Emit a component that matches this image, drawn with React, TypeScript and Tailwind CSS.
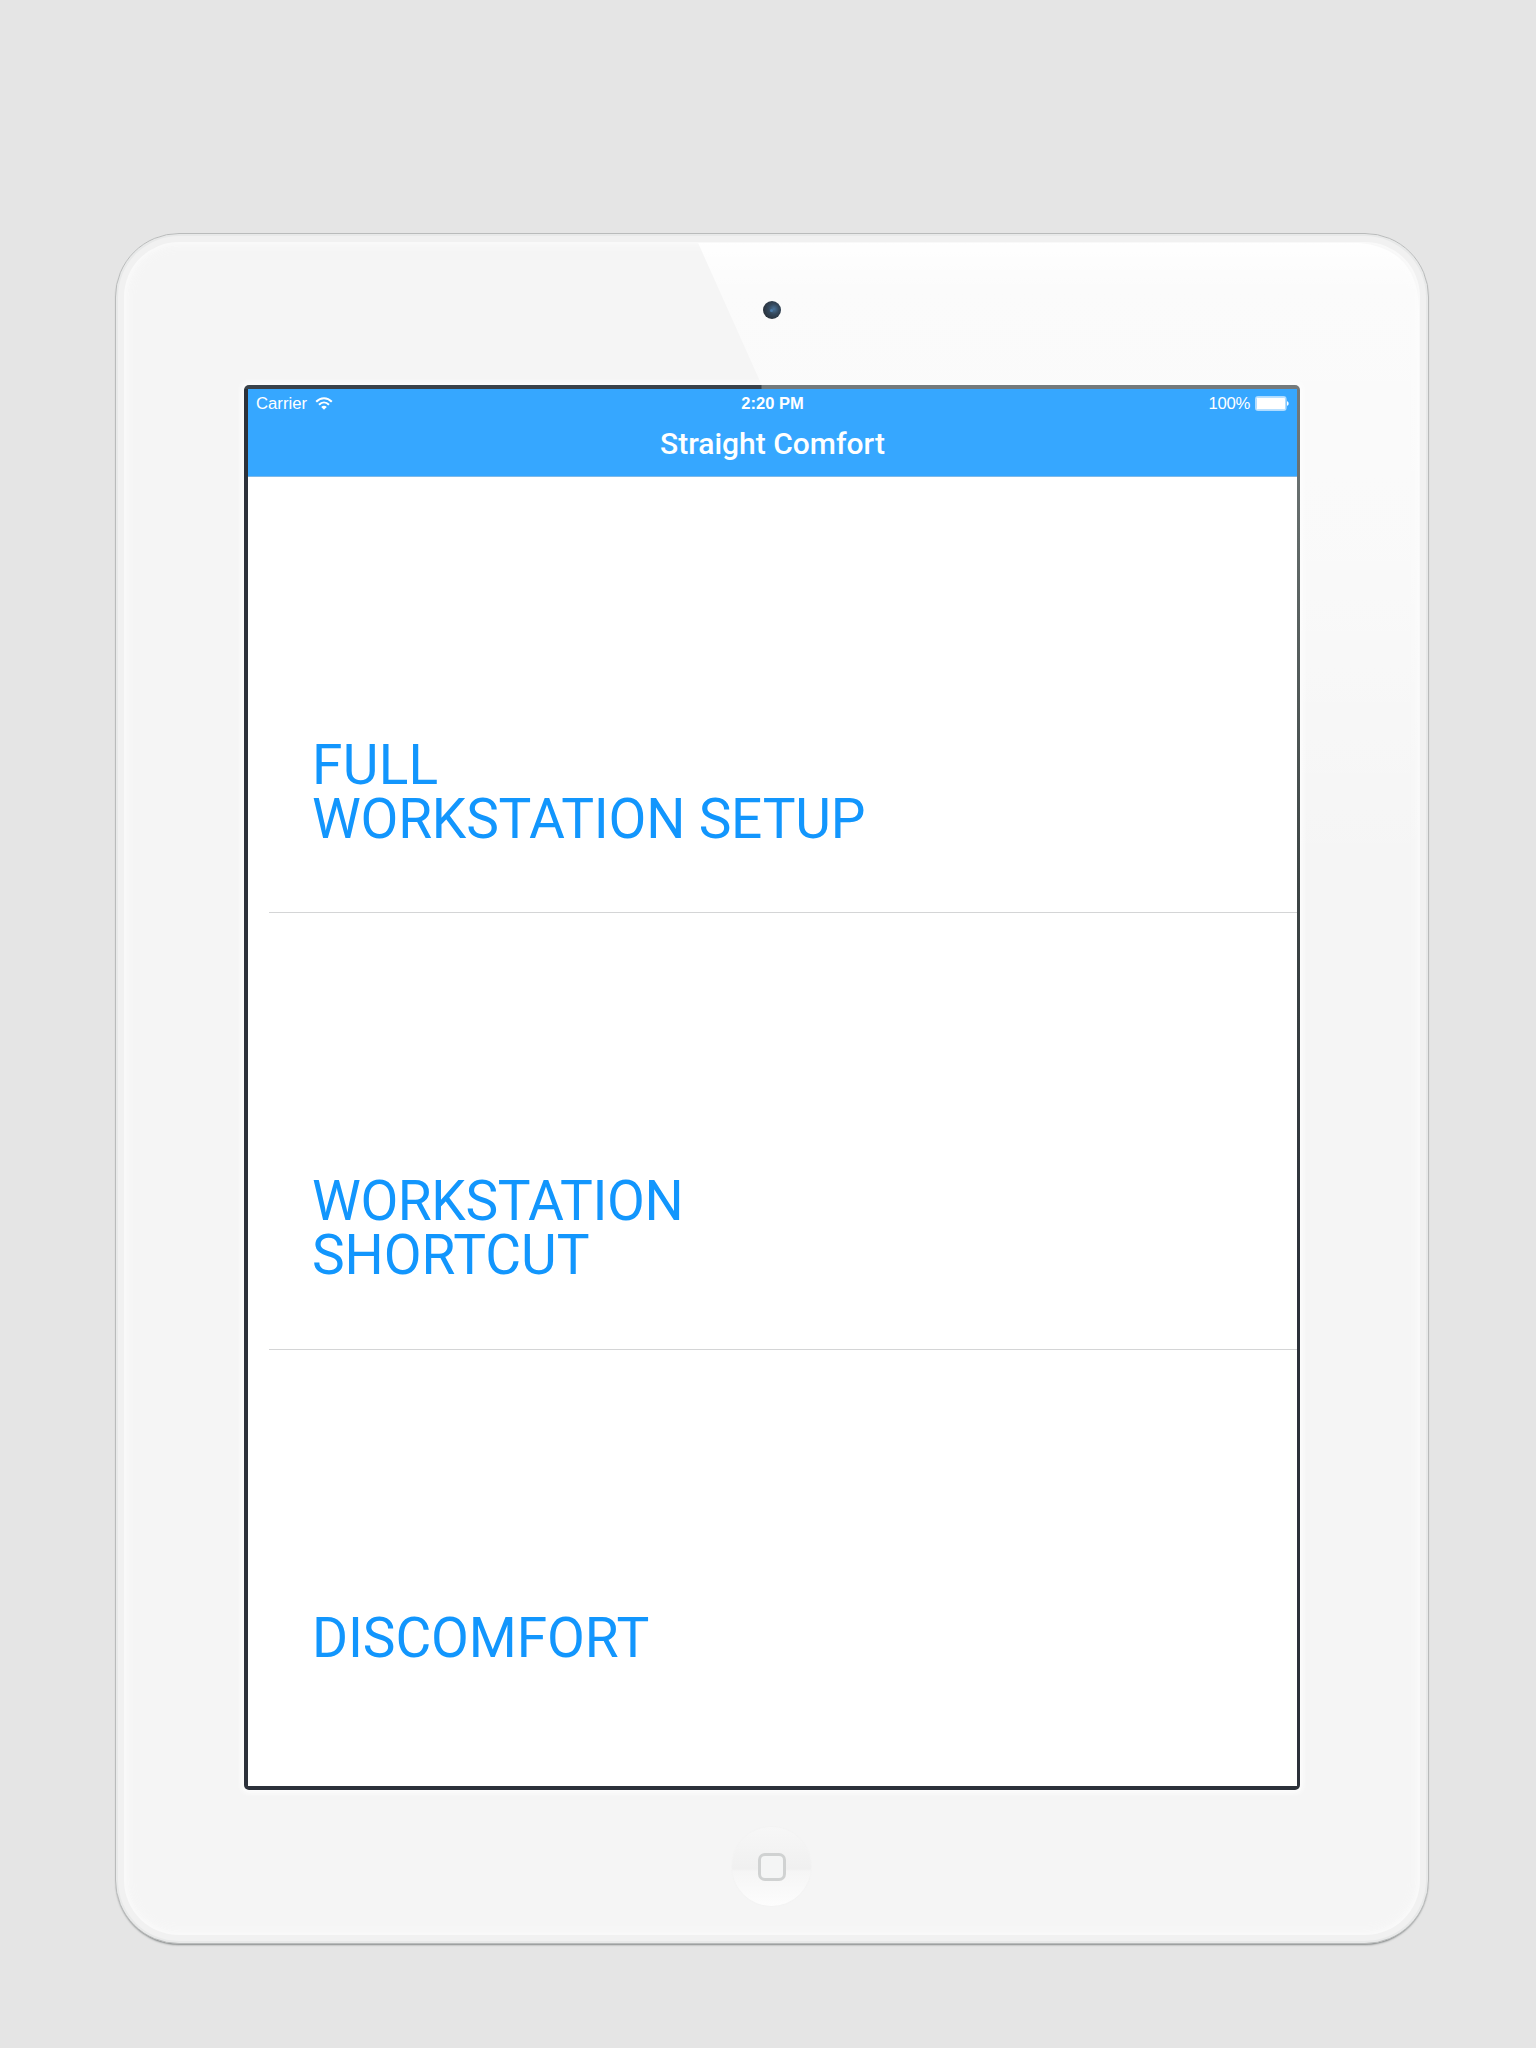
type Line = { text: string; className: string };

const rows: Line[][] = [
  [
    { text: "FULL", className: "tracking-[0.3px]" },
    { text: "WORKSTATION SETUP", className: "tracking-[-0.22px]" },
  ],
  [
    { text: "WORKSTATION", className: "tracking-[-0.4px]" },
    { text: "SHORTCUT", className: "tracking-[-0.05px]" },
  ],
  [{ text: "DISCOMFORT", className: "tracking-[-0.1px]" }],
];

function WifiIcon() {
  return (
    <svg className="ml-[8px] h-[14px] w-[18px]" viewBox="0 0 18 14" fill="none" stroke="white" strokeWidth="2.1">
      <path d="M1.2 4.7C5.7 0 12.3 0 16.8 4.7" />
      <path d="M4 7.7C7 4.7 11 4.7 14 7.7" />
      <path d="M6.2 9.9C7.8 8.3 10.2 8.3 11.8 9.9L9 12.7Z" fill="white" stroke="none" />
    </svg>
  );
}

function BatteryIcon() {
  return (
    <svg className="mb-[1px] ml-[5px] h-[15px] w-[34px]" viewBox="0 0 34 15">
      <rect x="0.8" y="0.8" width="30" height="13.4" rx="2.4" fill="#36a7ff" stroke="#b0dcff" strokeWidth="1.6" />
      <rect x="1.6" y="1.6" width="28.4" height="11.8" rx="1" fill="white" />
      <path d="M32 5.2C34.2 5.8 34.2 9.2 32 9.8Z" fill="white" />
    </svg>
  );
}

function Header() {
  return (
    <header className="h-[88px] shrink-0 border-b border-[#7fb9e8] bg-[#36a7ff] text-white">
      <div className="grid h-[30px] grid-cols-3 items-center pr-[8px] pl-[8px] font-['Liberation_Sans',Arial,sans-serif] text-[16.7px] leading-[30px]">
        <div className="flex items-center">
          <span>Carrier</span>
          <WifiIcon />
        </div>
        <div className="-mt-[2px] text-center text-[16.5px] font-bold">2:20 PM</div>
        <div className="flex items-center justify-end">
          <span className="tracking-[-0.3px]">100%</span>
          <BatteryIcon />
        </div>
      </div>
      <h1 className="mt-[7px] text-center text-[30px] leading-[36px] font-medium">Straight Comfort</h1>
    </header>
  );
}

function Glare() {
  return (
    <svg className="pointer-events-none absolute inset-0 h-full w-full" viewBox="0 0 1314 1711" preserveAspectRatio="none">
      <defs>
        <linearGradient id="glare" x1="0" y1="0" x2="0" y2="1">
          <stop offset="0" stopColor="#ffffff" stopOpacity="0.95" />
          <stop offset="0.03" stopColor="#ffffff" stopOpacity="0.6" />
          <stop offset="0.2" stopColor="#ffffff" stopOpacity="0.45" />
          <stop offset="0.4" stopColor="#ffffff" stopOpacity="0" />
        </linearGradient>
      </defs>
      <path d="M583 9H1245Q1303 14 1305 74V1600H1190V700L740 360Z" fill="url(#glare)" />
    </svg>
  );
}

export default function App() {
  return (
    <main className="flex h-[2048px] w-[1536px] flex-col bg-[#e5e5e5] pt-[233px] pl-[115px] font-[Roboto,sans-serif]">
      <div className="relative flex h-[1711px] w-[1314px] flex-col items-center rounded-[64px] border border-[#b9bbbb] bg-[#f5f5f5] shadow-[0_2px_2px_-1px_#858989,inset_0_0_0_2px_#e8e9e9,inset_0_0_0_8px_#f1f1f1,inset_0_0_4px_10px_#fafafa,inset_0_0_10px_14px_#f7f7f7]">
        <Glare />
        <div className="relative flex h-[151px] w-full shrink-0 justify-center pt-[67px] pr-[1px]">
          <div className="flex size-[18px] items-center justify-center rounded-full bg-[radial-gradient(circle_at_60%_45%,#49739a_0%,#34485c_35%,#283039_75%,#596168_100%)]">
            <div className="size-[3px] rounded-full bg-[#4b7cab]" />
          </div>
        </div>
        <section className="relative flex h-[1405px] w-[1056px] shrink-0 flex-col rounded-[5px] bg-[#2c313a] bg-[linear-gradient(90deg,#3b434b_0,#3b434b_517px,#747a7c_518px,#747a7c_100%),linear-gradient(180deg,#747a7c_0,#626a69_150px,#3d4545_500px,#2c313a_900px)] bg-[size:100%_4px,4px_100%] bg-[position:top_left,top_right] bg-no-repeat pt-[4px] pr-[3px] pb-[4px] pl-[4px] shadow-[0_0_5px_3px_#fdfdfd]">
          <Header />
          <div className="flex grow flex-col bg-white">
            {rows.map((lines, index) => (
              <div key={index} className="flex flex-1 pl-[21px]">
                <div className={index < rows.length - 1 ? "grow border-b border-[#d4d5d6] pt-[262px] pl-[43px]" : "grow pt-[262px] pl-[43px]"}>
                  <p className="text-[55px] leading-[53.5px] whitespace-nowrap text-[#1296fd]">
                    {lines.map((line, i) => (
                      <span key={line.text} className={line.className}>
                        {i > 0 && <br />}
                        {line.text}
                      </span>
                    ))}
                  </p>
                </div>
              </div>
            ))}
          </div>
        </section>
        <div className="relative mt-[37px] mr-[1px] flex size-[79px] items-center justify-center rounded-full bg-[linear-gradient(180deg,#f7f7f7_0%,#f0f0f0_53%,#f5f5f5_56%,#fdfdfd_100%)] shadow-[0_0_2px_#efefef]">
          <div className="size-[28px] rounded-[7px] border-[3px] border-[#d0d2d2] bg-[#f4f5f5]" />
        </div>
      </div>
    </main>
  );
}
